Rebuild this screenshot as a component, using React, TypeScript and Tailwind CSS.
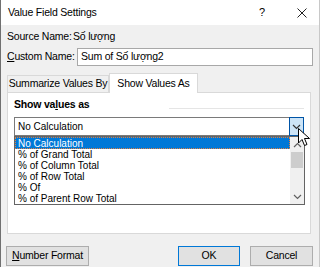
import React from 'react';

const ui = { fontFamily: '"Liberation Sans", Arial, sans-serif' };

function Chevron({ up = false, color = '#606060' }: { up?: boolean; color?: string }) {
  return (
    <svg width="9" height="6" viewBox="0 0 9 6">
      <path d={up ? 'M1 5 L4.5 1.5 L8 5' : 'M1 1 L4.5 4.5 L8 1'} fill="none" stroke={color} strokeWidth="1.2" />
    </svg>
  );
}

const items = [
  'No Calculation',
  '% of Grand Total',
  '% of Column Total',
  '% of Row Total',
  '% Of',
  '% of Parent Row Total',
];

export default function App() {
  return (
    <div
      className="w-[320px] h-[267px] bg-[#f0f0f0] text-[#000] text-[10.5px] tracking-[-0.2px] whitespace-nowrap border-l border-[#707070] border-r border-r-[#c8c8c8] flex flex-col overflow-hidden relative"
      style={ui}
    >
      <div className="h-[25px] bg-white flex items-center pl-[7px] pr-[12px] shrink-0">
        <span className="text-[10.5px]">Value Field Settings</span>
        <span className="ml-auto text-[11px] mr-[32px]">?</span>
        <svg width="10" height="10" viewBox="0 0 10 10">
          <path d="M0.5 0.5 L9.5 9.5 M9.5 0.5 L0.5 9.5" stroke="#222" strokeWidth="1" />
        </svg>
      </div>

      <div className="px-[5px] flex flex-col">
        <div className="flex items-center h-[16px] mt-[4px]">
          <span className="w-[67px] pl-[1px]">Source Name:</span>
          <span>Số lượng</span>
        </div>
        <div className="flex items-center h-[18px] mt-[3px]">
          <span className="w-[71px] pl-[1px]">
            <u>C</u>ustom Name:
          </span>
          <div className="flex-1 h-[18px] bg-white border border-[#a8a8a8] flex items-center px-[3px] mr-[1px]">
            Sum of Số lượng2
          </div>
        </div>

        <div className="flex items-end mt-[6px] h-[20px] pl-[1px] relative z-10">
          <div className="h-[17px] w-[102px] border border-b-0 border-[#d9d9d9] bg-[#f0f0f0] flex items-center justify-center">
            Summarize Values By
          </div>
          <div className="h-[20px] w-[89px] border border-b-0 border-[#d9d9d9] bg-white flex items-center justify-center -mb-[1px]">
            Show Values As
          </div>
        </div>

        <div className="ml-[1px] mr-[3px] h-[142px] bg-white border border-[#d9d9d9] relative px-[6px]">
          <div className="flex items-center h-[22px] mt-[1px]">
            <span className="font-bold">
              Show va<u>l</u>ues as
            </span>
            <div className="flex-1 ml-[80px] h-px bg-[#e5e5e5] mt-[7px]" />
          </div>
          <div className="h-[19px] mt-[1px] border border-[#7a7a7a] flex items-center pl-[3px] relative">
            <span className="text-[10px] tracking-normal">No Calculation</span>
            <div className="ml-auto w-[15px] h-[19px] -mr-px -my-px bg-[#cce4f7] border border-[#0054a6] flex items-center justify-center">
              <Chevron color="#333" />
            </div>
          </div>

          <div className="flex gap-[7px] mt-[28px]">
            {[0, 1].map((k) => (
              <div key={k} className="flex-1 h-[40px] border border-[#828282] bg-white flex justify-end">
                <div className="w-[14px] bg-[#f0f0f0] flex flex-col justify-end items-center pb-[6px]">
                  <Chevron color="#c0c0c0" />
                </div>
              </div>
            ))}
          </div>

          <div className="absolute left-[6px] right-[5px] top-[43px] h-[69px] bg-white border border-[#646464] flex z-20">
            <div className="flex-1 flex flex-col text-[10px] tracking-normal leading-[11px]">
              {items.map((t, i) => (
                <div
                  key={t}
                  className={
                    i === 0
                      ? 'h-[12px] pl-[2px] bg-[#0078d7] text-white border border-dotted border-[#e08040] flex items-center'
                      : 'h-[11px] pl-[3px] flex items-center'
                  }
                >
                  {t}
                </div>
              ))}
            </div>
            <div className="w-[14px] bg-[#f0f0f0] flex flex-col items-center">
              <div className="h-[14px] flex items-center justify-center mt-[1px]">
                <Chevron up />
              </div>
              <div className="w-[12px] h-[16px] bg-[#cdcdcd]" />
              <div className="mt-auto h-[14px] flex items-center justify-center">
                <Chevron />
              </div>
            </div>
          </div>
        </div>

        <div className="flex items-center mt-[12px]">
          <div className="w-[83px] h-[20px] bg-[#e1e1e1] border border-[#adadad] flex items-center justify-center">
            <span>
              <u>N</u>umber Format
            </span>
          </div>
          <div className="ml-auto w-[62px] h-[20px] bg-[#e1e1e1] border border-[#0078d7] flex items-center justify-center">
            OK
          </div>
          <div className="ml-[10px] mr-[1px] w-[63px] h-[20px] bg-[#e1e1e1] border border-[#adadad] flex items-center justify-center">
            Cancel
          </div>
        </div>
      </div>

      <svg className="absolute left-[297px] top-[128px] z-30" width="13" height="20" viewBox="0 0 13 20">
        <path d="M0.5 0.5 L0.5 15 L4 11.5 L6.5 17.5 L9 16.5 L6.5 10.5 L11.5 10.5 Z" fill="white" stroke="black" strokeWidth="1" />
      </svg>
    </div>
  );
}
